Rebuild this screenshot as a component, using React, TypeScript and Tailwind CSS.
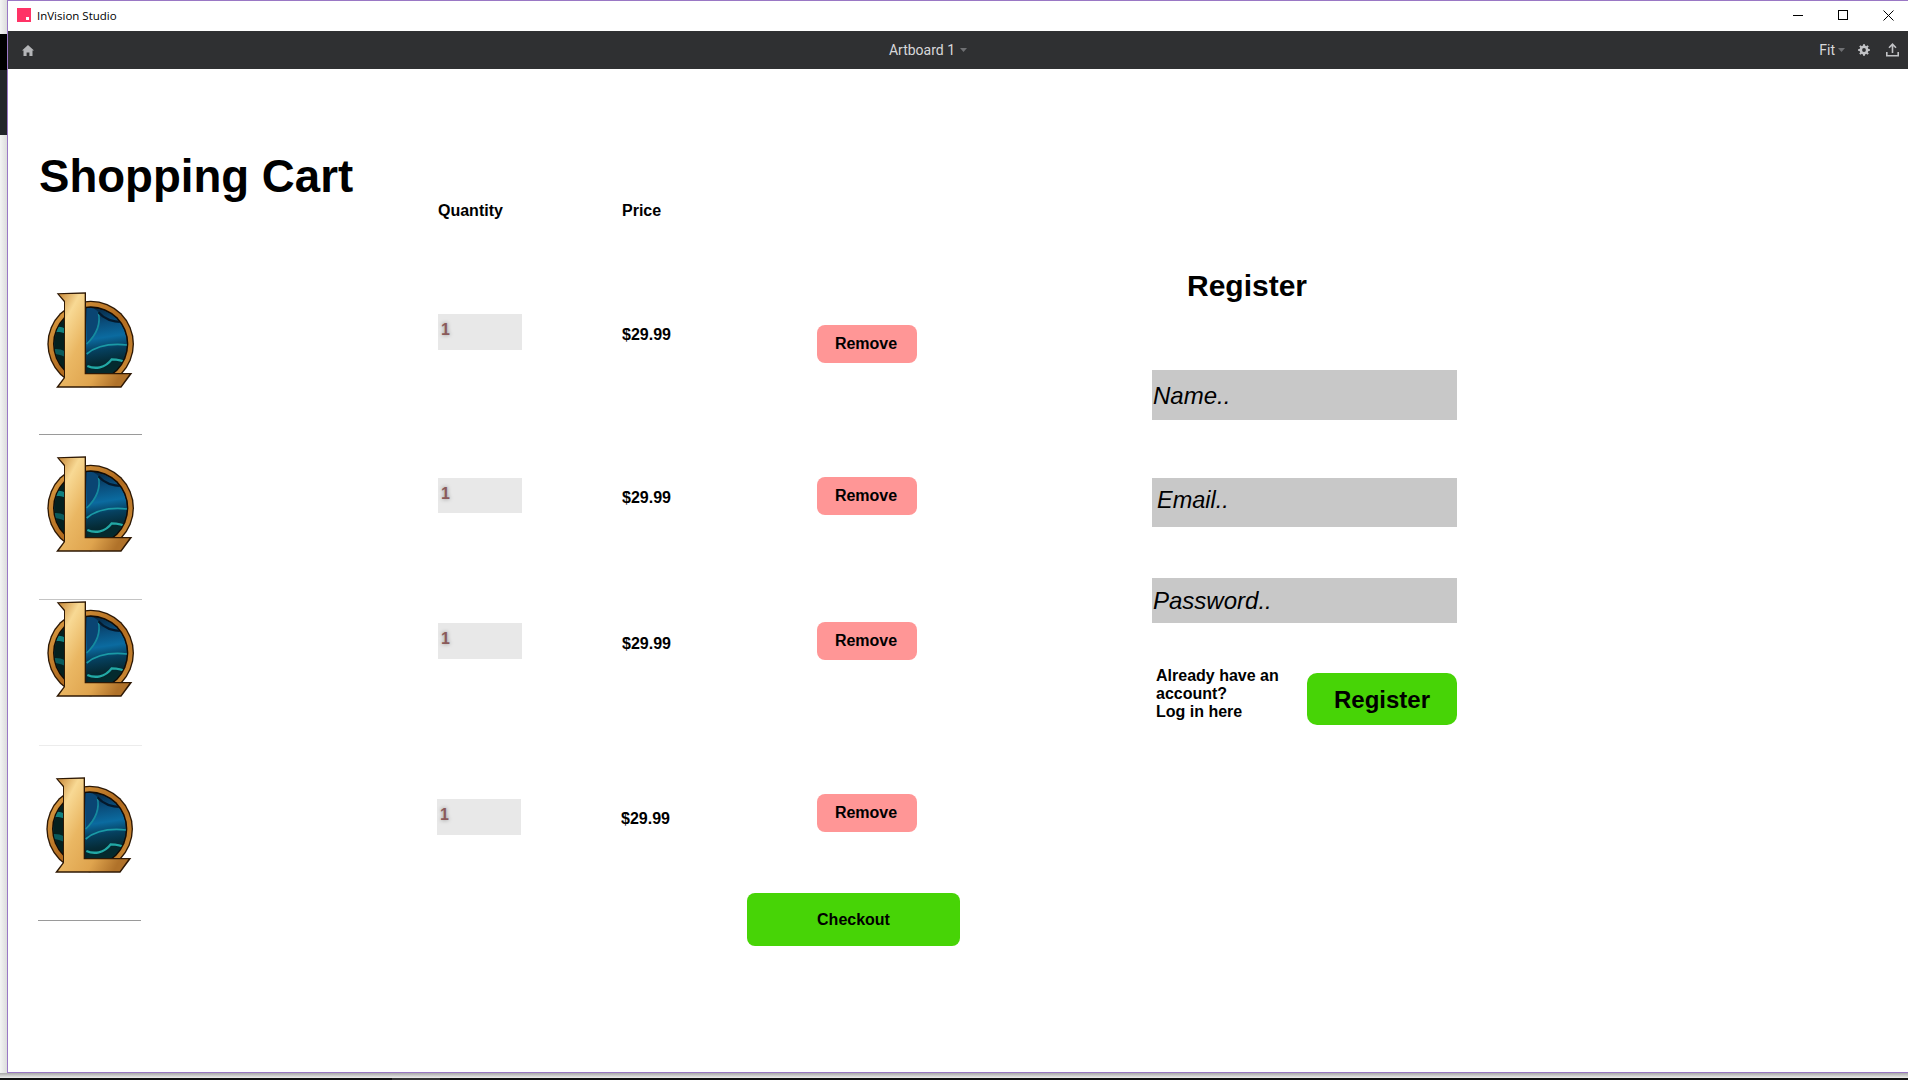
import { useId } from "react";

// League logo, coordinates traced from a 3x crop of the reference
function LeagueLogo() {
  const id = useId();
  return (
    <svg width="90" height="98" viewBox="48 33 270 294" className="block">
      <defs>
        <linearGradient id={`${id}ring`} x1="0" y1="0" x2="1" y2="1">
          <stop offset="0" stopColor="#e2a448" />
          <stop offset="0.5" stopColor="#b06a1e" />
          <stop offset="1" stopColor="#d0903a" />
        </linearGradient>
        <linearGradient id={`${id}disc`} x1="0.55" y1="0" x2="0.7" y2="1">
          <stop offset="0" stopColor="#072742" />
          <stop offset="0.22" stopColor="#0a4e7c" />
          <stop offset="0.42" stopColor="#0b6ba0" />
          <stop offset="0.58" stopColor="#06405f" />
          <stop offset="0.75" stopColor="#052b36" />
          <stop offset="1" stopColor="#031616" />
        </linearGradient>
        <linearGradient id={`${id}gold`} x1="0" y1="0" x2="1" y2="0.7">
          <stop offset="0" stopColor="#c98a3a" />
          <stop offset="0.2" stopColor="#f8d994" />
          <stop offset="0.45" stopColor="#eab763" />
          <stop offset="0.75" stopColor="#dfa44e" />
          <stop offset="1" stopColor="#b0722a" />
        </linearGradient>
        <clipPath id={`${id}clip`}>
          <circle cx="182" cy="192" r="109" />
        </clipPath>
      </defs>
      <circle cx="182" cy="192" r="130" fill="#2b1704" />
      <circle cx="182" cy="192" r="126" fill={`url(#${id}ring)`} />
      <circle cx="182" cy="192" r="113" fill="#120b04" />
      <g clipPath={`url(#${id}clip)`}>
        <circle cx="182" cy="192" r="109" fill={`url(#${id}disc)`} />
        <path d="M170 84 C185 80 200 88 206 98 C212 130 196 165 170 190Z" fill="#0a4573" />
        <path d="M205 97 C214 135 198 165 170 192" fill="none" stroke="#158a9e" strokeWidth="5" />
        <path d="M205 97 C225 120 255 128 288 126" fill="none" stroke="#04182b" strokeWidth="7" />
        <path d="M170 222 C200 197 245 190 292 195" fill="none" stroke="#1a9aa6" strokeWidth="5" />
        <path d="M172 262 C200 272 232 268 248 244 C265 246 280 250 288 254 L278 274 C245 290 205 292 172 280Z" fill="#042a2e" />
        <path d="M172 258 C195 268 225 265 245 238 C262 238 280 242 292 250" fill="none" stroke="#22a8a4" strokeWidth="7" />
        <path d="M60 80 H104 V300 H60Z" fill="#04201f" />
        <path d="M66 145 C85 138 95 140 104 146 L104 160 C90 155 78 155 68 158Z" fill="#12807f" />
        <path d="M60 210 C75 205 92 207 104 214 L104 230 C85 222 72 220 64 224Z" fill="#0a5a5c" />
      </g>
      <path d="M80 40 L168 37 L168 279 L307 279 L274 323 L78 323 L102 292 L102 66Z" fill="#2e1804" />
      <path d="M87 43 L164 41 L164 283 L298 283 L272 319 L87 319 L105 294 L105 63Z" fill={`url(#${id}gold)`} />
    </svg>
  );
}

function HomeIcon() {
  return (
    <svg width="12" height="11" viewBox="0 0 12 11" fill="#b4b5b8">
      <path d="M6 0 L12 5.5 L10.5 5.5 L10.5 11 L7.4 11 L7.4 7.5 L4.6 7.5 L4.6 11 L1.5 11 L1.5 5.5 L0 5.5Z" />
    </svg>
  );
}

function GearIcon() {
  return (
    <svg width="12" height="12" viewBox="0 0 12 12">
      <circle cx="6" cy="6" r="3.2" fill="none" stroke="#c2c3c6" strokeWidth="2.6" />
      <path d="M6 0.2V11.8M0.2 6H11.8M1.9 1.9L10.1 10.1M10.1 1.9L1.9 10.1" stroke="#c2c3c6" strokeWidth="2" strokeDasharray="2 7.6" />
    </svg>
  );
}

function UploadIcon() {
  return (
    <svg width="13" height="14" viewBox="0 0 13 14" fill="none" stroke="#c2c3c6" strokeWidth="1.6">
      <path d="M6.5 10V1.5M3 4.8L6.5 1.2L10 4.8" />
      <path d="M0.8 9V12.8H12.2V9" />
    </svg>
  );
}

function Caret() {
  return (
    <svg width="7" height="4" viewBox="0 0 7 4" fill="#6f7073">
      <path d="M0 0H7L3.5 4Z" />
    </svg>
  );
}

const rows = [
  {
    rowCls: "h-[164px] pl-[31px]",
    hrCls: "mt-[45px] bg-[#9a9a9a]",
    inputCls: "h-[36px] mt-[22px]",
    priceCls: "mt-[34px]",
    removeCls: "h-[38px] mt-[33px]",
  },
  {
    rowCls: "h-[145px] pl-[31px]",
    hrCls: "mt-[46px] bg-[#c4c4c4]",
    inputCls: "h-[35px] mt-[22px]",
    priceCls: "mt-[33px]",
    removeCls: "h-[38px] mt-[21px]",
  },
  {
    rowCls: "h-[176px] pl-[31px]",
    hrCls: "mt-[47px] bg-[#ececec]",
    inputCls: "h-[36px] mt-[22px]",
    priceCls: "mt-[34px]",
    removeCls: "h-[38px] mt-[21px]",
  },
  {
    rowCls: "pl-[30px]",
    hrCls: "mt-[46px] bg-[#9a9a9a]",
    inputCls: "h-[36px] mt-[22px]",
    priceCls: "mt-[33px]",
    removeCls: "h-[38px] mt-[17px] ml-px",
  },
];

export default function App() {
  return (
    <div className="flex h-[1080px] w-[1908px] flex-col overflow-hidden bg-white font-['Liberation_Sans',Arial,sans-serif] text-black">
      <div className="flex h-[1073px] shrink-0">
        {/* desktop peeking out left of the window */}
        <div className="flex w-[7px] shrink-0 flex-col bg-gradient-to-r from-[#f4f4f4] to-[#dcdcdc]">
          <div className="h-[34px]" />
          <div className="h-[36px] bg-black" />
          <div className="h-[65px] bg-[#22252a]" />
        </div>

        <div className="flex min-w-0 flex-1 flex-col border-t border-b border-l border-[#9a78c5]">
          {/* title bar */}
          <div className="flex h-[30px] shrink-0 items-center justify-between bg-white pr-[14px] pb-[2px] pl-[9px]">
            <div className="flex items-center gap-[6px]">
              <div className="flex h-[14px] w-[14px] items-end justify-end bg-[#ff3366] pr-[2px] pb-[2px]">
                <div className="h-[3px] w-[3px] bg-white" />
              </div>
              <span className="pt-px font-['Open_Sans',sans-serif] text-[11.5px]">InVision Studio</span>
            </div>
            <div className="flex items-center gap-[35px]">
              <div className="h-px w-[10px] bg-black" />
              <div className="h-[10px] w-[10px] border border-black" />
              <svg width="11" height="11" viewBox="0 0 11 11" stroke="#000" strokeWidth="1">
                <path d="M0.5 0.5L10.5 10.5M10.5 0.5L0.5 10.5" />
              </svg>
            </div>
          </div>

          {/* toolbar */}
          <div className="grid h-[38px] shrink-0 grid-cols-3 items-center bg-[#2f3032] pl-[14px] font-['Roboto',sans-serif] text-[14px] text-[#d8d8da]">
            <div>
              <HomeIcon />
            </div>
            <div className="flex items-center justify-center gap-[5px] pr-[74px]">
              <span>Artboard 1</span>
              <Caret />
            </div>
            <div className="flex items-center justify-end pr-[9px]">
              <div className="mr-[13px] flex items-center gap-[3px]">
                <span>Fit</span>
                <Caret />
              </div>
              <div className="mr-[16px]">
                <GearIcon />
              </div>
              <UploadIcon />
            </div>
          </div>

          {/* artboard */}
          <div className="flex min-h-0 flex-1 bg-white">
            <div className="w-[1144px] shrink-0 pt-[81px]">
              <div className="flex h-[142px] pl-[31px]">
                <h1 className="mt-px w-[399px] text-[45.6px] leading-[52px] font-bold">Shopping Cart</h1>
                <div className="mt-[52px] w-[184px] text-[16px] leading-[18px] font-bold">Quantity</div>
                <div className="mt-[52px] text-[16px] leading-[18px] font-bold">Price</div>
              </div>

              {rows.map((row, i) => (
                <div key={i} className={`flex ${row.rowCls}`}>
                  <div className="w-[399px] shrink-0">
                    <div className="-mt-px ml-[7px]">
                      <LeagueLogo />
                    </div>
                    <div className={`h-px w-[103px] ${row.hrCls}`} />
                  </div>
                  <div>
                    <div className="flex">
                      <div className="w-[184px] shrink-0">
                        <div className={`w-[84px] bg-[#e8e8e8] pt-[7px] pl-[3px] text-[16px] leading-[18px] font-bold text-[#8a5a5a] [text-shadow:0_0_4px_rgba(0,0,0,0.4)] ${row.inputCls}`}>
                          1
                        </div>
                      </div>
                      <div className="w-[195px] shrink-0">
                        <div className={`text-[16px] leading-[18px] font-bold ${row.priceCls}`}>$29.99</div>
                      </div>
                      <button className={`flex w-[100px] items-center justify-center rounded-[8px] bg-[#ff9696] pr-[2px] text-[16px] font-bold ${row.removeCls}`}>
                        Remove
                      </button>
                    </div>
                    {i === 3 && (
                      <button className="mt-[58px] ml-[310px] flex h-[53px] w-[213px] items-center justify-center rounded-[8px] bg-[#47d406] text-[16px] font-bold">
                        Checkout
                      </button>
                    )}
                  </div>
                </div>
              ))}
            </div>

            {/* register */}
            <div className="w-[305px] shrink-0 pt-[198px]">
              <h2 className="ml-[35px] text-[30px] leading-[38px] font-bold">Register</h2>
              <div className="mt-[65px] flex h-[50px] items-center bg-[#c8c8c8] pt-[2px] pl-px text-[24px] italic">Name..</div>
              <div className="mt-[58px] flex h-[49px] items-center bg-[#c8c8c8] pb-[3px] pl-[5px] text-[23.5px] italic">Email..</div>
              <div className="mt-[51px] flex h-[45px] items-center bg-[#c8c8c8] pt-px pl-px text-[24px] italic">Password..</div>
              <div className="mt-[43px] flex items-start justify-between">
                <p className="mt-px ml-[4px] text-[16px] leading-[18px] font-bold">
                  Already have an
                  <br />
                  account?
                  <br />
                  Log in here
                </p>
                <button className="mt-[7px] flex h-[52px] w-[150px] items-center justify-center rounded-[10px] bg-[#47d406] pt-px text-[24px] font-bold">
                  Register
                </button>
              </div>
            </div>
          </div>
        </div>
      </div>

      {/* window shadow and taskbar edge */}
      <div className="h-[5px] shrink-0 bg-gradient-to-b from-[#a8a8a8] to-[#efefef]" />
      <div className="flex h-[2px] shrink-0 bg-[#111111]">
        <div className="ml-[392px] w-[48px] bg-[#333333]" />
      </div>
    </div>
  );
}
